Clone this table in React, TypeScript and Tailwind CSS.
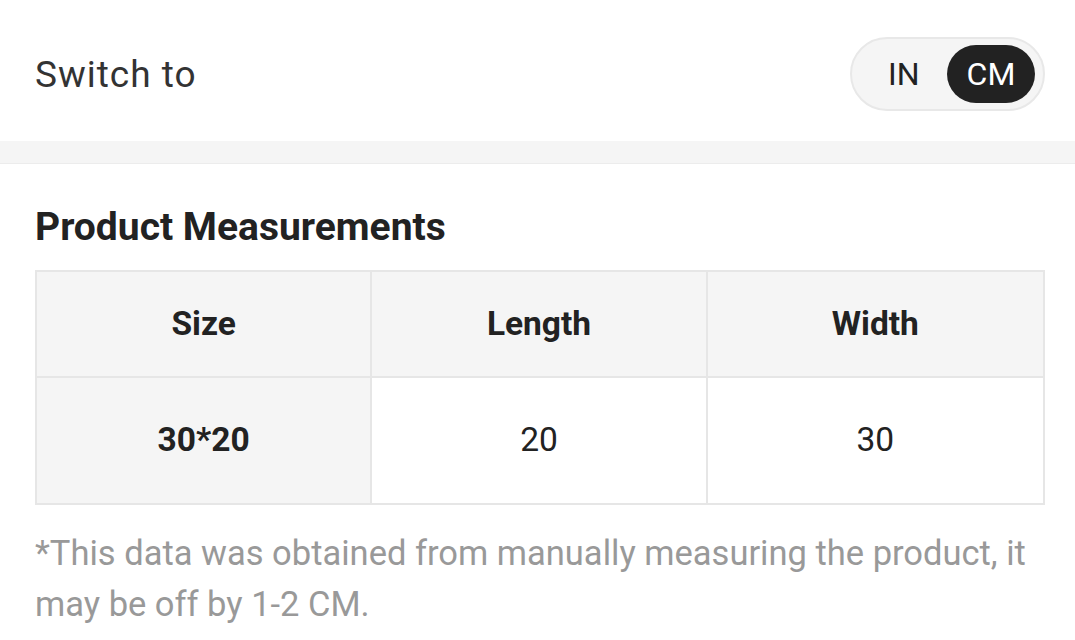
import React from "react";

export default function App() {
  return (
    <div
      className="w-[1075px] h-[640px] bg-white overflow-hidden text-[#222]"
      style={{ fontFamily: "Roboto, 'Noto Sans', sans-serif" }}
    >
      <div className="h-[141px] flex items-center justify-between pl-[35px] pr-[30px] pt-[7px]">
        <div className="text-[37px] tracking-[1px] text-[#333] leading-none">Switch to</div>
        <div className="w-[195px] h-[74px] rounded-full bg-[#f5f5f5] border-2 border-[#e8e8e8] flex items-center pl-[36px] pr-[8px]">
          <span className="text-[32px] text-[#222] leading-none">IN</span>
          <span className="ml-auto w-[88px] h-[58px] rounded-full bg-[#222] text-white text-[32px] leading-none flex items-center justify-center">
            CM
          </span>
        </div>
      </div>
      <div className="h-[23px] bg-[#f5f5f5] border-b border-[#ececec]" />
      <div className="px-[35px] pt-[44px]">
        <div className="text-[39px] font-bold leading-none text-[#222]">Product Measurements</div>
        <div className="mt-[23px] w-[1010px] border-2 border-[#e6e6e6] grid grid-cols-3">
          <div className="h-[106px] bg-[#f5f5f5] flex items-center justify-center text-[33.5px] font-bold border-r-2 border-b-2 border-[#e6e6e6]">Size</div>
          <div className="h-[106px] bg-[#f5f5f5] flex items-center justify-center text-[33.5px] font-bold border-r-2 border-b-2 border-[#e6e6e6]">Length</div>
          <div className="h-[106px] bg-[#f5f5f5] flex items-center justify-center text-[33.5px] font-bold border-b-2 border-[#e6e6e6]">Width</div>
          <div className="h-[125px] bg-[#f5f5f5] flex items-center justify-center text-[33.5px] font-bold border-r-2 border-[#e6e6e6]">30*20</div>
          <div className="h-[125px] bg-white flex items-center justify-center text-[33.5px] border-r-2 border-[#e6e6e6]">20</div>
          <div className="h-[125px] bg-white flex items-center justify-center text-[33.5px]">30</div>
        </div>
        <p className="mt-[23px] text-[34.5px] leading-[51px] text-[#999] pr-[10px]">
          *This data was obtained from manually measuring the product, it may be off by 1-2 CM.
        </p>
      </div>
    </div>
  );
}
